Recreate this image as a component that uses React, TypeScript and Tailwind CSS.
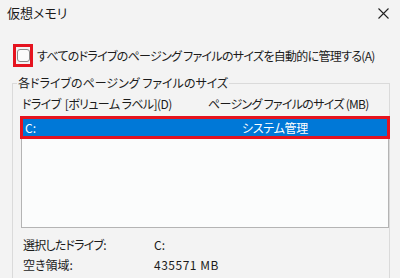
export default function App() {
  return (
    <div className="w-[400px] h-[278px] overflow-hidden bg-[#f3f3f3] text-[12px] leading-[16px] text-[#1b1b1b] font-['Noto_Sans_CJK_JP',sans-serif] [font-feature-settings:'palt']">
      {/* title bar */}
      <div className="flex h-[26px] items-center justify-between pl-[7px] pr-[11px]">
        <span className="text-[13px]">仮想メモリ</span>
        <svg width="11" height="11" viewBox="0 0 11 11" className="text-[#222]">
          <path d="M0.5 0.5 L10.5 10.5 M10.5 0.5 L0.5 10.5" stroke="currentColor" strokeWidth="1.1" fill="none" />
        </svg>
      </div>

      {/* auto manage checkbox */}
      <div className="mt-[18px] flex h-[23px] items-center">
        <div className="ml-[13px] flex h-[23px] w-[20px] items-center justify-center border-[3px] border-[#e5131f]">
          <div className="h-[13px] w-[13px] rounded-[3px] border border-[#8a8a8a] bg-[#fbfbfb]" />
        </div>
        <span className="ml-[4px] tracking-[-0.7px]">すべてのドライブのページング ファイルのサイズを自動的に管理する(A)</span>
      </div>

      {/* group box */}
      <fieldset className="mt-[8px] ml-[12px] h-[230px] w-[378px] border border-[#dadada] p-0">
        <legend className="ml-[4px] px-[1px] leading-[16px]">各ドライブのページング ファイルのサイズ</legend>

        <div className="mt-[5px] ml-[9px] grid grid-cols-[186px_1fr]">
          <span className="tracking-[-0.6px]">ドライブ&nbsp;&nbsp;[ボリューム ラベル](D)</span>
          <span className="tracking-[-0.7px]">ページング ファイルのサイズ (MB)</span>
        </div>

        <div className="mt-[4px] ml-[8px] h-[112px] w-[368px] border border-[#b4b4b4] bg-[#fbfcfc]">
          <div className="relative grid h-[21px] grid-cols-[217px_1fr] items-center bg-[#0078d7] pl-[3px] text-white">
            <span>C:</span>
            <span className="tracking-[-0.3px]">システム管理</span>
            <span className="pointer-events-none absolute -left-[2px] -right-[2px] -top-[1px] -bottom-[1px] border-[3px] border-[#e5131f]" />
          </div>
        </div>

        <div className="mt-[7px] ml-[10px] grid grid-cols-[131px_1fr] leading-[20px]">
          <span className="tracking-[-0.8px]">選択したドライブ:</span>
          <span>C:</span>
          <span>空き領域:</span>
          <span className="tracking-[0.5px]">435571 MB</span>
        </div>
      </fieldset>
    </div>
  );
}
